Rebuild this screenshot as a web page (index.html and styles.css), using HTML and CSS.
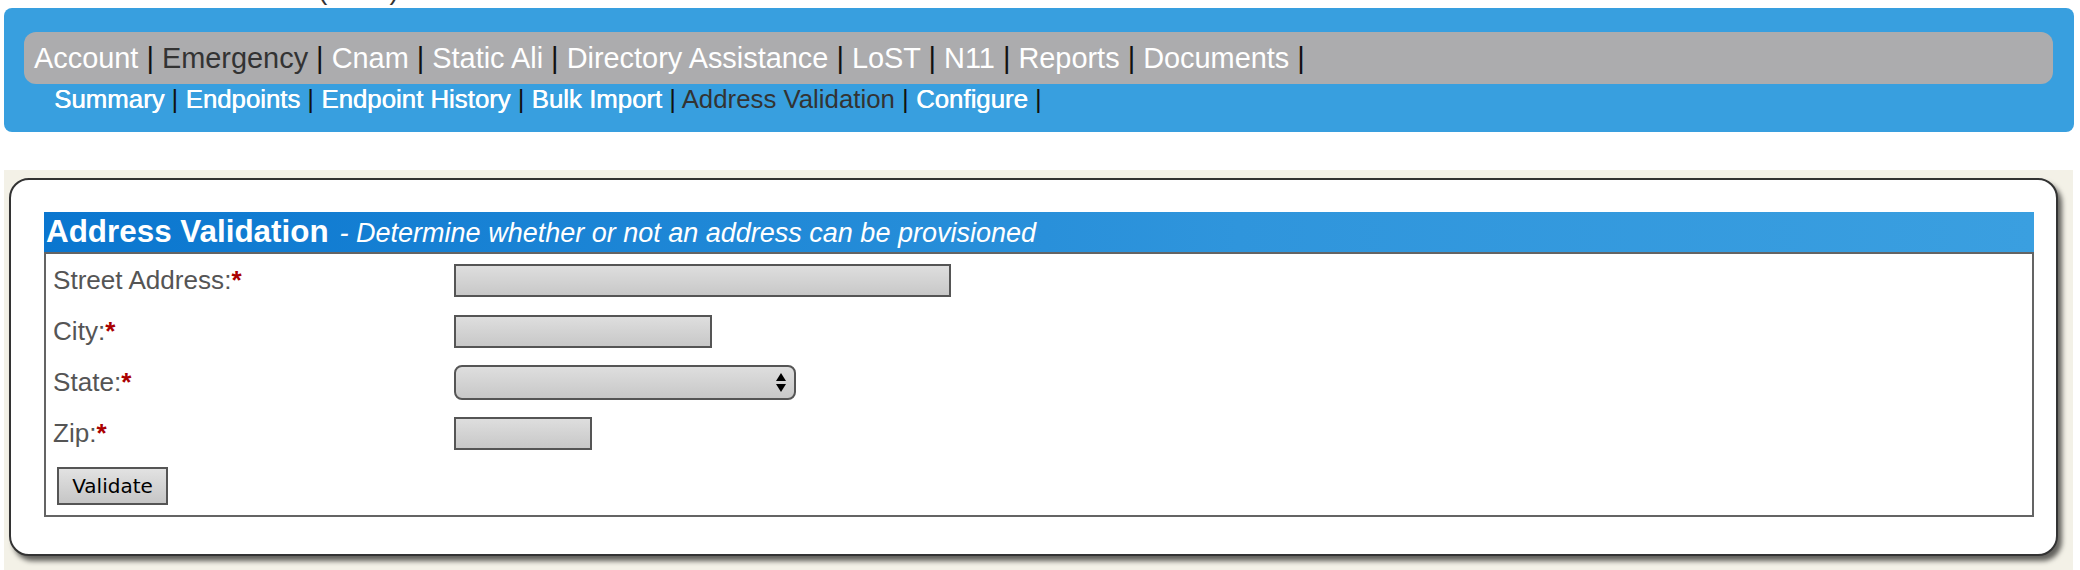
FILE: index.html
```html
<!DOCTYPE html>
<html lang="en">
    <head>
        <meta charset="UTF-8" />
        <meta name="viewport" content="width=device-width, initial-scale=1.0" />
        <title>Address Validation</title>
        <link rel="stylesheet" href="styles.css">
    </head>
    <body>
        <!--잘린 윗줄-->
        <div class="topline">
            <div class="acct">(1234)</div>
        </div>

        <!--상단메뉴-->
        <div class="header">
            <div class="mainnav">
                <a href="#">Account</a> | <a href="#" class="on">Emergency</a> | <a href="#">Cnam</a> | <a href="#">Static Ali</a> | <a href="#">Directory Assistance</a> | <a href="#">LoST</a> | <a href="#">N11</a> | <a href="#">Reports</a> | <a href="#">Documents</a> |
            </div>
            <div class="subnav">
                <a href="#">Summary</a> | <a href="#">Endpoints</a> | <a href="#">Endpoint History</a> | <a href="#">Bulk Import</a> | <a href="#" class="on">Address Validation</a> | <a href="#">Configure</a> |
            </div>
        </div>

        <!--본문-->
        <div class="content">
            <div class="panel">
                <div class="formbox">
                    <div class="formtitle">
                        <b>Address Validation</b><i>- Determine whether or not an address can be provisioned</i>
                    </div>
                    <form class="formbody">
                        <div class="row">
                            <label>Street Address:<span class="req">*</span></label>
                            <input type="text" class="fld street" />
                        </div>
                        <div class="row">
                            <label>City:<span class="req">*</span></label>
                            <input type="text" class="fld city" />
                        </div>
                        <div class="row">
                            <label>State:<span class="req">*</span></label>
                            <div class="selbox">
                                <select class="fld state">
                                    <option></option>
                                </select>
                                <svg class="arrows" width="10" height="19" viewBox="0 0 10 19">
                                    <path d="M5 0 L10 8 L0 8 Z M0 11 L10 11 L5 19 Z" fill="#000" />
                                </svg>
                            </div>
                        </div>
                        <div class="row">
                            <label>Zip:<span class="req">*</span></label>
                            <input type="text" class="fld zip" />
                        </div>
                        <button type="button" class="btn">Validate</button>
                    </form>
                </div>
            </div>
        </div>
    </body>
</html>
```

FILE: styles.css
```css
html,
body {
    margin: 0px;
    padding: 0px;
    width: 100%;
    height: 100%;
}

body {
    font-family: "Liberation Sans", Arial, Helvetica, sans-serif;
    background: #fff;
}

a {
    text-decoration: none;
    color: #fff;
}

/* 위쪽에 잘려 보이는 계정줄 */
.topline {
    height: 8px;
    overflow: hidden;
}

.acct {
    margin-top: -24px;
    padding-left: 318px;
    line-height: 28px;
    font-size: 28px;
    color: #333;
}

/* 상단메뉴 */
.header {
    margin: 0px 6px 0px 4px;
    padding: 24px 21px 18px 20px;
    background: #389fdf;
    border-radius: 8px;
    color: #111;
}

.mainnav {
    height: 52px;
    line-height: 52px;
    padding-left: 10px;
    background: #acacae;
    border-radius: 12px;
    font-size: 28.9px;
    white-space: nowrap;
}

.subnav {
    padding-left: 30px;
    line-height: 30px;
    font-size: 25.8px;
    white-space: nowrap;
}

/* 흰 글씨 살짝 두껍게 */
.subnav a {
    text-shadow: 0.5px 0px 0px #fff;
}

/* 현재메뉴 */
.mainnav a.on,
.subnav a.on {
    color: #333;
    text-shadow: none;
}

/* 본문 배경 */
.content {
    margin: 38px 7px 0px 4px;
    padding: 8px 15px 14px 5px;
    background: #f3f1e7;
}

.panel {
    padding: 32px 22px 37px 33px;
    background: #fff;
    border: 2px solid #333;
    border-radius: 20px;
    box-shadow: 4px 5px 5px rgba(0, 0, 0, 0.6);
}

.formtitle {
    height: 40px;
    line-height: 40px;
    padding-left: 2px;
    background: linear-gradient(to right, #0a76cf, #2f95dc 60%, #3a9fe0);
    color: #fff;
    white-space: nowrap;
}

.formtitle b {
    font-size: 31.4px;
}

.formtitle i {
    margin-left: 11px;
    font-size: 27px;
}

.formbody {
    margin: 0px;
    padding: 1px 0px 10px 7px;
    border: 2px solid #646464;
}

.row {
    display: flex;
    align-items: center;
    height: 51px;
}

.row label {
    flex-shrink: 0;
    width: 401px;
    font-size: 26.1px;
    color: #555;
}

.req {
    color: #a00;
    font-weight: bold;
}

/* 입력창 */
.fld {
    box-sizing: border-box;
    height: 33px;
    margin: 0px;
    padding: 0px 6px;
    border: 2px solid #555;
    background: linear-gradient(#dedede, #c8c8c8);
    font-family: inherit;
    font-size: 20px;
}

.street {
    width: 497px;
}

.city {
    width: 258px;
}

.zip {
    width: 138px;
}

.selbox {
    position: relative;
}

.state {
    display: block;
    width: 342px;
    height: 35px;
    border-radius: 8px;
    appearance: none;
    -webkit-appearance: none;
}

.arrows {
    position: absolute;
    top: 8px;
    right: 10px;
}

.btn {
    box-sizing: border-box;
    width: 111px;
    height: 38px;
    margin: 8px 0px 0px 4px;
    padding: 0px;
    border: 2px solid #555;
    background: linear-gradient(#e2e2e2, #c6c6c6);
    font-family: "DejaVu Sans", "Liberation Sans", sans-serif;
    font-size: 20px;
    color: #000;
}
```
